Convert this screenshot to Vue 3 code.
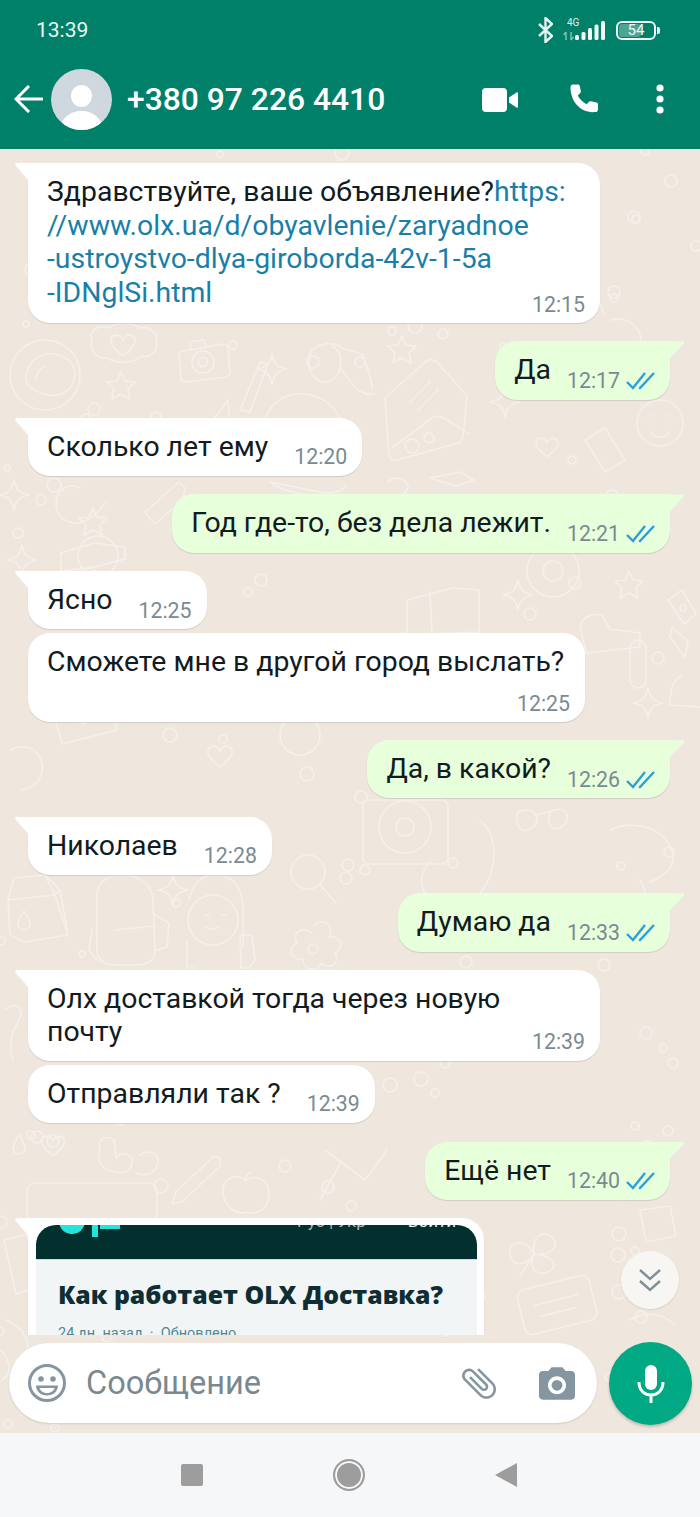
<template>
  <div class="phone">
    <header class="topbar">
      <div class="status">
        <span class="clock">13:39</span>
        <div class="status-icons">
          <svg width="15" height="26" viewBox="0 0 15 26" fill="none" stroke="#e6f3ef" stroke-width="2.4">
            <path d="M1 7l13 12-6.500 6V1L14 7 1 19" />
          </svg>
          <div class="net">
            <span class="net-label">4G</span>
            <svg width="43" height="20" viewBox="0 0 43 20">
              <path d="M3 11v8M0.500 14L3 11M8 11v8M10.500 16L8 19" stroke="#7fbfae" stroke-width="1.500" fill="none" />
              <rect x="12" y="14" width="4" height="5" rx="1.500" fill="#f2f9f7" />
              <rect x="18.500" y="11" width="4" height="8" rx="1.500" fill="#f2f9f7" />
              <rect x="25" y="7" width="4" height="12" rx="1.500" fill="#f2f9f7" />
              <rect x="31.500" y="3.500" width="4" height="15.500" rx="1.500" fill="#f2f9f7" />
              <rect x="38" y="0" width="4" height="19" rx="1.500" fill="#f2f9f7" />
            </svg>
          </div>
          <div class="battery">
            <div class="battery-fill"></div>
            <span class="battery-num">54</span>
          </div>
          <div class="battery-nub"></div>
        </div>
      </div>
      <div class="toolbar">
        <svg class="back" width="29" height="28" viewBox="0 0 29 28" fill="none" stroke="#fff" stroke-width="3">
          <path d="M29 14H3M15 1L2 14l13 13" />
        </svg>
        <svg class="avatar" width="61" height="61" viewBox="0 0 61 61">
          <defs>
            <clipPath id="av"><circle cx="30.500" cy="30.500" r="30.500" /></clipPath>
          </defs>
          <circle cx="30.500" cy="30.500" r="30.500" fill="#cfd8de" />
          <g clip-path="url(#av)" fill="#fff">
            <ellipse cx="30.500" cy="27" rx="10.500" ry="11" />
            <ellipse cx="30.500" cy="60" rx="21" ry="18" />
          </g>
        </svg>
        <span class="title">+380 97 226 4410</span>
        <svg class="video" width="36" height="24" viewBox="0 0 36 24" fill="#fff">
          <rect x="0" y="0" width="25" height="24" rx="4" />
          <path d="M27 9.500l7.500-5c.7-.4 1.500 0 1.500 .8v13.400c0 .8-.8 1.200-1.500 .8l-7.500-5z" />
        </svg>
        <svg class="call" width="31" height="30" viewBox="0 0 31 30" fill="#fff">
          <path d="M3 .5h5c1 0 1.600.6 1.800 1.500l1 5c.2.8 0 1.400-.6 2l-2.400 2.400c2 3.800 5 6.800 8.800 8.800l2.400-2.400c.6-.6 1.200-.8 2-.6l5.500 1.200c.9.2 1.500.9 1.500 1.800v5.200c0 1.600-1.200 2.600-2.800 2.600C11.500 29.500.5 18.500.5 3.300.5 1.700 1.500.5 3 .5z" />
        </svg>
        <svg class="dots" width="8" height="30" viewBox="0 0 8 30" fill="#fff">
          <circle cx="4" cy="4" r="3.600" />
          <circle cx="4" cy="15" r="3.600" />
          <circle cx="4" cy="26" r="3.600" />
        </svg>
      </div>
    </header>

    <main class="chat">
      <!-- wallpaper doodles, in page coordinates -->
      <svg class="wallpaper" viewBox="0 149 700 1284" fill="none" stroke="#f5f0e9" stroke-width="1.600" stroke-linecap="round" stroke-linejoin="round">
        <defs>
          <path id="heart" d="M0 6C-3-1-13 0-12 8c1 6 8 10 12 14 4-4 11-8 12-14C13 0 3-1 0 6z" />
          <path id="star4" d="M0-15C2-5 5-2 15 0 5 2 2 5 0 15-2 5-5 2-15 0-5-2-2-5 0-15z" />
          <path id="star5" d="M0-14l4 9 10 1-7 7 2 10-9-5-9 5 2-10-7-7 10-1z" />
          <path id="drop" d="M0-10c4 6 6 9 6 13a6 6 0 0 1-12 0c0-4 2-7 6-13z" />
        </defs>
        <circle v-for="(d, i) in dots" :key="i" :cx="d.x" :cy="d.y" :r="d.r" />

        <!-- top area -->
        <circle cx="45" cy="375" r="35" />
        <path d="M26 378c0-16 14-26 28-24s24 12 20 26-18 18-30 14-18-8-18-16zM36 380c0-6 4-12 9-14" />
        <path d="M92 340c-4-10 8-16 16-12 8-6 24-6 32 0 10-2 20 6 16 14 4 10-8 16-14 14-10 8-26 8-34 2-10 2-20-8-16-18z" />
        <use href="#heart" transform="translate(123 334)" />
        <path d="M179 352l44-8c3 0 5 1 5 4l2 24c0 3-1 4-4 5l-40 5c-3 0-5-1-5-4z" />
        <path d="M191 349l-1-7 14-2 2 6" />
        <circle cx="203" cy="362" r="11" />
        <circle cx="203" cy="362" r="4.500" />
        <use href="#star4" x="272" y="369" />
        <use href="#star5" x="121" y="386" />
        <path d="M312 350c10-8 24-8 30-2l20 6M312 350c-6 10-4 24 6 30s20-2 22-12 0-18-8-22M340 368l14 18c6 6 14 10 20 8M362 354c4 10 10 22 10 36" />
        <use href="#star5" x="402" y="350" />
        <path d="M385 398l40-36c4-3 8-3 12 0l30 34-4 40c-1 6-4 8-8 8l-58 16c-4 1-7-1-8-5z" />
        <path d="M392 448l40-30c4-3 8-2 12 0l25 16M410 402l20-20M418 410l20-20" />
        <path d="M265 420c4-16 20-28 40-26s34 16 36 30" />
        <path d="M228 400l-18 24 20 2zM240 410l20-48 8 2-18 48z" />
        <use href="#star4" x="14" y="495" />
        <use href="#star5" x="93" y="522" />
        <path d="M145 512l34-30 6 6-2 12-28 24z" />
        <path d="M80 488c-12-6-24 2-24 16s14 22 26 18 18-12 24-20" />
        <path d="M61 553l34-10 30 4 0 12-30 8-34 4z" />
        <circle cx="98" cy="556" r="20" />
        <use href="#star4" x="22" y="560" />
        <path d="M270 482l50 10c10 2 20 0 26-6M270 482c6 6 30 14 50 14" />
        <path d="M388 482c8-8 20-2 20 6l-6 10" />
        <path d="M430 478l30-6 14 8-18 6z" />
        <path d="M560 300c16-12 40-6 44 14M610 320c18-4 34 8 30 26" />
        <use href="#star4" x="505" y="402" />
        <circle cx="660" cy="423" r="23" />
        <path d="M650 432c6 7 14 7 20 0" />
        <use href="#heart" transform="translate(650 414) scale(.35)" />
        <use href="#heart" transform="translate(670 414) scale(.35)" />
        <use href="#heart" transform="translate(547 437) scale(.9)" />
        <path d="M585 440l20-12 20 32-20 12z" />
        <circle cx="553" cy="571" r="26" />
        <circle cx="553" cy="571" r="10" />
        <path d="M407 600l46-12 26 2 0 42-46 2-26 2zM430 592l2 44" />
        <use href="#star4" x="518" y="595" />
        <use href="#star5" x="629" y="585" />
        <path d="M668 600l14-10 14 24-12 10zM672 627l16 14-3 16-15-20z" />
        <path d="M580 625c4-8 12-12 22-10l8 14 30 4v14l-54 6z" />
        <rect x="630" y="640" width="16" height="48" rx="8" />
        <use href="#star4" x="648" y="703" />
        <path d="M682 675c-10 6-12 16-12 30l30 2" />
        <path d="M50 700l55-14 12 44-55 14zM50 700l34 24 21-38" />
        <use href="#heart" transform="translate(220 745)" />
        <path d="M10 750c16-8 30 0 32 14s-8 24-20 26" />
        <circle cx="300" cy="735" r="20" />
        <!-- left middle -->
        <path d="M8 900l6-22 31-3 15 15 8 45-43 7-15-7zM8 900l47-5 5-5M45 875l10 20 13 40" />
        <use href="#drop" x="24" y="921" />
        <path d="M97 895c0-12 10-20 26-20s30 10 30 26l2 50c0 10-8 14-20 14h-20c-12 0-18-6-18-16zM92 930l-3 20 8 10M155 915l14 8-2 24-12 4M115 930l40-4" />
        <circle cx="213" cy="920" r="25" />
        <path d="M189 900c4-18 14-25 26-25 16 0 26 10 28 30v42M187 940v28h8M205 915h4M222 915h4M205 926c4 4 10 4 14 0" />
        <path d="M240 935h12l3 25-6 8h-8z" />
        <path d="M315 925c8-8 20 0 14 12 12-2 16 12 6 16 6 10-6 18-14 10-4 10-18 8-18-4-12 2-16-12-6-16-6-10 6-18 14-10" />
        <circle cx="313" cy="949" r="5" />
        <use href="#star4" x="173" y="890" />
        <circle cx="308" cy="872" r="17" />
        <path d="M320 885l16 18" />
        <rect x="363" y="800" width="85" height="64" rx="6" />
        <circle cx="405" cy="827" r="26" />
        <circle cx="405" cy="827" r="9" />
        <path d="M518 812c10-4 18-2 19 6 0 8-8 14-14 12s-8-12-5-18zM537 815c6-2 10-2 14-4M551 811c10-4 16-1 16 6s-8 14-14 11-5-12-2-17z" />
        <path d="M480 820c14 12 18 34 10 56s-30 38-50 30-24-30-10-44" />
        <path d="M610 830c20-10 50-4 60 16s-6 30-20 36M640 880c10 14 4 36-12 40" />
        <!-- bottom left -->
        <path d="M5 1010c12-10 20 0 14 10s-12 24-6 40" />
        <use href="#heart" transform="translate(53 1135) scale(.95)" />
        <use href="#drop" x="19" y="1145" />
        <path d="M100 1150c-4-10 6-16 14-10l2 18c6-8 18-4 16 6s-14 10-24 6-10-14-8-20zM140 1155c8-6 20-2 18 8s-12 14-22 10" />
        <path d="M176 1192l38-36 6 2 0 8-38 36-10 2z" />
        <path d="M245 1180c-10-8-24 0-22 14s16 22 24 18c10 4 22-4 22-18s-12-20-24-14zM245 1180c0-4 2-6 6-8" />
        <rect x="27" y="1183" width="130" height="60" rx="8" />
        <path d="M325 1150l40 30 22-30M320 1200l20-36" />
        <path d="M4 1240l24-6 12 52-24 8z" />
        <path d="M534 1254c-10-18-26-12-24 0s14 14 24 0c-6 16 4 22 14 18s8-16-14-18c22 2 26-12 16-18s-18 2-16 18zM534 1254l-14 22" />
        <path d="M600 1150c16-6 40 0 44 20s-8 30-24 30" />
        <rect x="520" y="1282" width="74" height="46" rx="8" transform="rotate(-14 557 1305)" />
        <path d="M535 1300h44M538 1312h36" transform="rotate(-14 557 1305)" />
        <path d="M640 1210l30-4 6 30-30 6z" />
        <path d="M630 1320c14-8 30-8 44 4" />
        <path d="M2 1380c14-8 4-26-2-30" />
        <path d="M6 1320c14 6 22 16 22 30" />
      </svg>

      <div class="messages">
        <div
          v-for="(m, i) in messages"
          :key="i"
          class="bubble"
          :class="[m.out ? 'out' : 'in', m.kind || 'row', { grouped: m.grouped }]"
          :style="m.width ? { width: m.width + 'px' } : null"
        >
          <div class="text">
            <template v-for="(part, j) in m.lines" :key="j">
              <span :class="{ link: part.link }">{{ part.text }}</span>
              <br v-if="part.br" />
            </template>
          </div>
          <div class="meta">
            <span class="time">{{ m.time }}</span>
            <svg v-if="m.out" class="ticks" width="30" height="18" viewBox="0 0 30 18" fill="none" stroke="#2b9fd8" stroke-width="2.400">
              <path d="M1 10l6 6L19 1M13 15.500l1 .5L28 1" />
            </svg>
          </div>
        </div>

        <div class="bubble in image-bubble">
          <div class="shot">
            <div class="shot-head">
              <svg class="olx" width="66" height="13" viewBox="0 0 66 13">
                <circle cx="14" cy="-4" r="13" fill="#23e5db" />
                <rect x="34" y="-1" width="6" height="13" fill="#23e5db" />
                <rect x="42" y="-1" width="20" height="5" fill="#23e5db" />
              </svg>
              <span class="shot-links">Рус | Укр</span>
              <span class="shot-login">Войти</span>
            </div>
            <div class="shot-body">
              <div class="shot-title">Как работает OLX Доставка?</div>
              <div class="shot-date">24 дн. назад &nbsp;·&nbsp; Обновлено</div>
            </div>
          </div>
        </div>
      </div>

      <button class="scroll-down">
        <svg width="24" height="26" viewBox="0 0 24 26" fill="none" stroke="#7f8f96" stroke-width="2.400">
          <path d="M2 3l10 9 10-9M2 14l10 9 10-9" />
        </svg>
      </button>

      <div class="composer">
        <div class="input">
          <svg class="emoji" width="38" height="38" viewBox="0 0 38 38" fill="none" stroke="#8696a0" stroke-width="3">
            <circle cx="19" cy="19" r="17.500" />
            <circle cx="13" cy="15" r="2.800" fill="#8696a0" stroke="none" />
            <circle cx="25" cy="15" r="2.800" fill="#8696a0" stroke="none" />
            <path d="M8 21.500h22c0 6-5 10-11 10S8 27.500 8 21.500z" fill="#8696a0" stroke="none" />
            <path d="M11.500 24h15c-1 3.500-4 5-7.500 5s-6.500-1.500-7.500-5z" fill="#fff" stroke="none" />
          </svg>
          <span class="placeholder">Сообщение</span>
          <svg class="clip" width="42" height="42" viewBox="0 0 24 24" fill="#8696a0">
            <path transform="rotate(-45 12 12)" d="M16.500 6v11.500c0 2.210-1.790 4-4 4s-4-1.790-4-4V5c0-1.380 1.120-2.500 2.500-2.500s2.500 1.120 2.500 2.500v10.500c0 .55-.45 1-1 1s-1-.45-1-1V6H10v9.500c0 1.380 1.120 2.500 2.500 2.500s2.500-1.120 2.500-2.500V5c0-2.210-1.790-4-4-4S7 2.790 7 5v12.500c0 3.040 2.460 5.500 5.500 5.500s5.500-2.460 5.500-5.500V6h-1.500z" />
          </svg>
          <svg class="camera" width="36" height="33" viewBox="2 2 20 18" fill="#8696a0">
            <path d="M9 2L7.170 4H4c-1.100 0-2 .9-2 2v12c0 1.100.9 2 2 2h16c1.100 0 2-.9 2-2V6c0-1.100-.9-2-2-2h-3.170L15 2H9zm3 15c-2.760 0-5-2.240-5-5s2.240-5 5-5 5 2.240 5 5-2.240 5-5 5z" />
            <circle cx="12" cy="12" r="3" />
          </svg>
        </div>
        <button class="mic">
          <svg width="28" height="38" viewBox="0 0 28 38" fill="none" stroke="#fff" stroke-width="3">
            <rect x="8" y="0" width="12" height="25" rx="6" fill="#fff" stroke="none" />
            <path d="M2 17c0 8 5 13 12 13s12-5 12-13M14 30v8" />
          </svg>
        </button>
      </div>
    </main>

    <nav class="navbar">
      <div class="nav-square"></div>
      <div class="nav-circle"></div>
      <div class="nav-back"></div>
    </nav>
  </div>
</template>

<script setup>
const messages = [
  {
    kind: 'stack overlap',
    width: 572,
    time: '12:15',
    lines: [
      { text: 'Здравствуйте, ваше объявление?' },
      { text: 'https:', link: true, br: true },
      { text: '//www.olx.ua/d/obyavlenie/zaryadnoe', link: true, br: true },
      { text: '-ustroystvo-dlya-giroborda-42v-1-5a', link: true, br: true },
      { text: '-IDNglSi.html', link: true },
    ],
  },
  { out: true, time: '12:17', lines: [{ text: 'Да' }] },
  { time: '12:20', lines: [{ text: 'Сколько лет ему' }] },
  { out: true, time: '12:21', lines: [{ text: 'Год где-то, без дела лежит.' }] },
  { time: '12:25', lines: [{ text: 'Ясно' }] },
  { kind: 'stack', grouped: true, width: 557, time: '12:25', lines: [{ text: 'Сможете мне в другой город выслать?' }] },
  { out: true, time: '12:26', lines: [{ text: 'Да, в какой?' }] },
  { time: '12:28', lines: [{ text: 'Николаев' }] },
  { out: true, time: '12:33', lines: [{ text: 'Думаю да' }] },
  {
    kind: 'stack overlap tight',
    width: 572,
    time: '12:39',
    lines: [{ text: 'Олх доставкой тогда через новую', br: true }, { text: 'почту' }],
  },
  { grouped: true, time: '12:39', lines: [{ text: 'Отправляли так ?' }] },
  { out: true, time: '12:40', lines: [{ text: 'Ещё нет' }] },
]

// scatter of tiny rings in the wallpaper, fixed seed so it never changes
let seed = 7
const rand = () => {
  seed = (seed * 16807) % 2147483647
  return seed / 2147483647
}
const dots = Array.from({ length: 150 }, () => ({
  x: Math.round(rand() * 700),
  y: Math.round(149 + rand() * 1284),
  r: 3 + Math.round(rand() * 4),
}))
</script>

<style>
html,
body {
  margin: 0;
  background: #efe7de;
}
</style>

<style scoped>
.phone {
  width: 700px;
  height: 1517px;
  display: flex;
  flex-direction: column;
  font-family: Roboto, "Noto Sans", sans-serif;
  overflow: hidden;
  color: #111b21;
}
.topbar {
  height: 149px;
  flex: none;
  background: #008069;
  color: #fff;
}
.status {
  height: 60px;
  display: flex;
  align-items: center;
  padding: 0 40px 0 36px;
}
.clock {
  font-size: 21px;
  color: #eef7f4;
}
.status-icons {
  margin-left: auto;
  display: flex;
  align-items: center;
}
.net {
  position: relative;
  margin-left: 10px;
  width: 43px;
  height: 20px;
  margin-top: 2px;
}
.net-label {
  position: absolute;
  left: 4px;
  top: -3px;
  font-size: 10px;
  line-height: 10px;
  color: #e0f0ec;
}
.battery {
  position: relative;
  margin-left: 10px;
  width: 40px;
  height: 19px;
  box-sizing: border-box;
  border: 2px solid #eef7f4;
  border-radius: 6px;
  display: flex;
  align-items: center;
  justify-content: center;
}
.battery-fill {
  position: absolute;
  left: 1px;
  top: 1px;
  bottom: 1px;
  width: 22px;
  border-radius: 3px;
  background: #4da493;
}
.battery-num {
  position: relative;
  font-size: 15px;
  color: #f2f9f7;
}
.battery-nub {
  width: 3px;
  height: 7px;
  margin-left: 1px;
  background: #eef7f4;
  border-radius: 0 2px 2px 0;
}
.toolbar {
  display: flex;
  align-items: center;
  height: 78px;
  padding: 0 36px 0 14px;
}
.avatar {
  margin-left: 8px;
}
.title {
  margin-left: 15px;
  font-size: 31.800px;
  font-weight: 500;
  white-space: nowrap;
}
.video {
  margin-left: auto;
  margin-top: 2px;
}
.call {
  margin-left: 52px;
}
.dots {
  margin-left: 55px;
}

.chat {
  position: relative;
  flex: 1;
  min-height: 0;
  display: flex;
  flex-direction: column;
  background: #efe7de;
}
.wallpaper {
  position: absolute;
  left: 0;
  top: 0;
  width: 700px;
  height: 1284px;
}
.messages {
  position: relative;
  flex: 1;
  min-height: 0;
  overflow: hidden;
  display: flex;
  flex-direction: column;
  padding: 14px 30px 0 28px;
}
.bubble {
  position: relative;
  flex: none;
  box-sizing: border-box;
  margin-top: 18.300px;
  border-radius: 22px;
  background: #fff;
  box-shadow: 0 1px 1px rgba(0, 0, 0, 0.12);
  font-size: 28.400px;
  line-height: 33.500px;
}
.bubble:first-child {
  margin-top: 0;
}
.bubble.grouped {
  margin-top: 4px;
}
.bubble.in {
  align-self: flex-start;
}
.bubble.out {
  align-self: flex-end;
  background: #e7ffdb;
}
.bubble.in:not(.grouped) {
  border-top-left-radius: 0;
}
.bubble.out {
  border-top-right-radius: 0;
}
.bubble.in:not(.grouped)::before {
  content: "";
  position: absolute;
  left: -13px;
  top: 0;
  width: 14px;
  height: 18px;
  background: #fff;
  clip-path: polygon(0 2px, 1px 0, 100% 0, 100% 100%);
}
.bubble.out::after {
  content: "";
  position: absolute;
  right: -14px;
  top: 0;
  width: 15px;
  height: 18px;
  background: #e7ffdb;
  clip-path: polygon(0 0, 100% 0, 100% 2px, 0 100%);
}
.row {
  display: flex;
  align-items: flex-start;
  padding: 12px 14px 0 19px;
  height: 58.300px;
}
.row .meta {
  margin-left: 16px;
  margin-top: 15.500px;
}
.row.in .meta {
  margin-left: 26px;
  margin-right: 1px;
}
.stack {
  padding: 12px 15px 6px 19px;
}
.stack .meta {
  margin-top: 13px;
  justify-content: flex-end;
}
.overlap .meta {
  margin-top: -16px;
}
.tight {
  padding-bottom: 7px;
}
.tight .meta {
  margin-top: -19px;
}
.text {
  white-space: nowrap;
}
.link {
  color: #1a7fa8;
}
.meta {
  display: flex;
  align-items: center;
  height: 24px;
}
.time {
  font-size: 21.300px;
  line-height: 24px;
  color: #7b8a91;
}
.ticks {
  margin-left: 6px;
}

.image-bubble {
  width: 456px;
  height: 140px;
  padding: 7px 7px 0 8px;
  border-bottom-left-radius: 0;
  border-bottom-right-radius: 0;
}
.shot {
  border-radius: 20px 20px 0 0;
  overflow: hidden;
  background: #f2f5f5;
  height: 133px;
}
.shot-head {
  display: flex;
  height: 35px;
  overflow: hidden;
  background: #02302f;
  border-bottom: 1px solid #cfdcdc;
  box-sizing: border-box;
  color: #e8f0f0;
  font-size: 17px;
  line-height: 17px;
  padding-left: 22px;
}
.olx {
  flex: none;
}
.shot-links {
  margin: -12px 0 0 173px;
  white-space: nowrap;
  color: #a9bcbc;
}
.shot-login {
  margin: -12px 0 0 42px;
}
.shot-body {
  padding: 18px 0 0 22px;
}
.shot-title {
  font-family: "Open Sans", sans-serif;
  font-weight: 800;
  font-size: 24.800px;
  line-height: 32px;
  color: #0f2e33;
  white-space: nowrap;
}
.shot-date {
  margin-top: 15px;
  font-size: 14.500px;
  line-height: 18px;
  color: #4f8a93;
  white-space: nowrap;
}

.scroll-down {
  position: absolute;
  right: 21px;
  top: 1102px;
  width: 58px;
  height: 58px;
  padding: 0;
  border: none;
  border-radius: 50%;
  background: #f7f6f3;
  box-shadow: 0 1px 2px rgba(0, 0, 0, 0.1);
  display: flex;
  align-items: center;
  justify-content: center;
}

.composer {
  position: relative;
  flex: none;
  height: 98px;
  box-sizing: border-box;
  display: flex;
  align-items: flex-start;
  padding: 7px 8px 0 9px;
}
.input {
  margin-top: 1px;
  width: 588px;
  height: 80px;
  box-sizing: border-box;
  border-radius: 40px;
  background: #fff;
  box-shadow: 0 1px 2px rgba(0, 0, 0, 0.12);
  display: flex;
  align-items: center;
  padding: 0 22px 0 19px;
}
.placeholder {
  margin-left: 20px;
  font-size: 32.500px;
  color: #7a8890;
}
.clip {
  margin-left: auto;
}
.camera {
  margin-left: 39px;
}
.mic {
  flex: none;
  margin-left: 12px;
  width: 83px;
  height: 83px;
  padding: 0;
  border: none;
  border-radius: 50%;
  background: #00a884;
  box-shadow: 0 2px 3px rgba(0, 0, 0, 0.2);
  display: flex;
  align-items: center;
  justify-content: center;
}

.navbar {
  position: relative;
  flex: none;
  height: 84px;
  background: #f6f7f9;
  display: flex;
  align-items: center;
  justify-content: center;
  gap: 130px;
  padding-right: 2px;
  box-sizing: border-box;
}
.nav-square {
  width: 22px;
  height: 22px;
  border-radius: 2px;
  background: #9d9d9d;
}
.nav-circle {
  width: 32px;
  height: 32px;
  box-sizing: border-box;
  border-radius: 50%;
  border: 2px solid #9d9d9d;
  background: #9d9d9d;
  box-shadow: inset 0 0 0 2px #f6f7f9;
}
.nav-back {
  width: 22px;
  height: 24px;
  background: #9d9d9d;
  clip-path: polygon(100% 0, 100% 100%, 0 50%);
}
</style>
